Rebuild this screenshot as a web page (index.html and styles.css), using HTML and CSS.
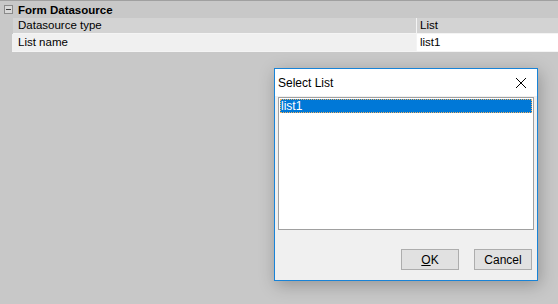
FILE: index.html
```html
<!DOCTYPE html>
<html lang="en">
<head>
    <meta charset="UTF-8">
    <title>Form Datasource</title>
    <link rel="stylesheet" href="styles.css">
</head>
<body>
    <div class="grid">
        <div class="category">
            <span class="toggle"></span>
            <span class="cat-title">Form Datasource</span>
        </div>
        <div class="prop prop-type">
            <div class="prop-name">Datasource type</div>
            <div class="prop-value">List</div>
        </div>
        <div class="prop prop-list">
            <div class="prop-name">List name</div>
            <div class="prop-value">list1</div>
        </div>
    </div>

    <div class="dialog">
        <div class="titlebar">
            <span class="title">Select List</span>
            <svg class="close" width="12" height="12" viewBox="0 0 12 12">
                <path d="M1 1 L11 11 M11 1 L1 11" stroke="#000" stroke-width="1" fill="none"/>
            </svg>
        </div>
        <div class="client">
            <div class="listbox">
                <div class="item selected">list1</div>
            </div>
            <div class="buttons">
                <button class="btn"><u>O</u>K</button>
                <button class="btn">Cancel</button>
            </div>
        </div>
    </div>
</body>
</html>
```

FILE: styles.css
```css
body {
    margin: 0;
    background: #c8c8c8;
    font-family: "Liberation Sans", Arial, sans-serif;
    font-size: 11.5px;
    color: #000;
    width: 558px;
    height: 304px;
    overflow: hidden;
}
.grid {
    border-top: 1px solid #a0a0a0;
}
.category {
    display: flex;
    align-items: center;
    height: 17px;
}
.toggle {
    position: relative;
    box-sizing: border-box;
    width: 9px;
    height: 9px;
    margin-left: 4px;
    border: 1px solid #8a8a8a;
    background: #d8d8d8;
}
.toggle::after {
    content: "";
    position: absolute;
    left: 1px;
    top: 3px;
    width: 5px;
    height: 1px;
    background: #404040;
}
.cat-title {
    margin-left: 5px;
    font-weight: bold;
    font-size: 11.5px;
}
.prop {
    display: flex;
    margin-left: 13px;
    border-bottom: 1px solid #f4f4f4;
}
.prop-name {
    box-sizing: border-box;
    width: 404px;
    padding-left: 5px;
    border-right: 1px solid #f4f4f4;
}
.prop-value {
    flex: 1;
    padding-left: 3px;
}
.prop-type {
    height: 15px;
    line-height: 15px;
    background: #d3d3d3;
}
.prop-list {
    margin-left: 12px;
    height: 17px;
    line-height: 17px;
    background: #f0f0f0;
}
.prop-list .prop-name {
    width: 405px;
    padding-left: 6px;
}
.prop-list .prop-value {
    background: #fff;
}
.dialog {
    position: absolute;
    left: 274px;
    top: 68px;
    width: 262px;
    height: 211px;
    border: 1px solid #1883d7;
    background: #f0f0f0;
    box-shadow: 2px 4px 16px rgba(0,0,0,0.26);
    display: flex;
    flex-direction: column;
}
.titlebar {
    height: 27px;
    background: #fff;
    display: flex;
    align-items: center;
    justify-content: space-between;
    padding: 0 10px 0 3px;
}
.title {
    font-size: 12px;
}
.client {
    padding: 1px 3px 0 3px;
}
.listbox {
    box-sizing: border-box;
    width: 256px;
    height: 133px;
    border: 1px solid #a0a0a0;
    background: #fff;
    padding: 1px;
}
.item {
    height: 14px;
    line-height: 14px;
    font-size: 12px;
    padding-left: 1px;
}
.selected {
    background: #0078d7;
    color: #fff;
    outline: 1px dotted #f0b060;
    outline-offset: -1px;
}
.buttons {
    display: flex;
    justify-content: flex-end;
    gap: 15px;
    margin-top: 19px;
    padding-right: 2px;
}
.btn {
    box-sizing: border-box;
    width: 58px;
    height: 21px;
    background: #e1e1e1;
    border: 1px solid #adadad;
    font-family: "Liberation Sans", Arial, sans-serif;
    font-size: 12px;
    padding: 0;
    color: #000;
}
```
